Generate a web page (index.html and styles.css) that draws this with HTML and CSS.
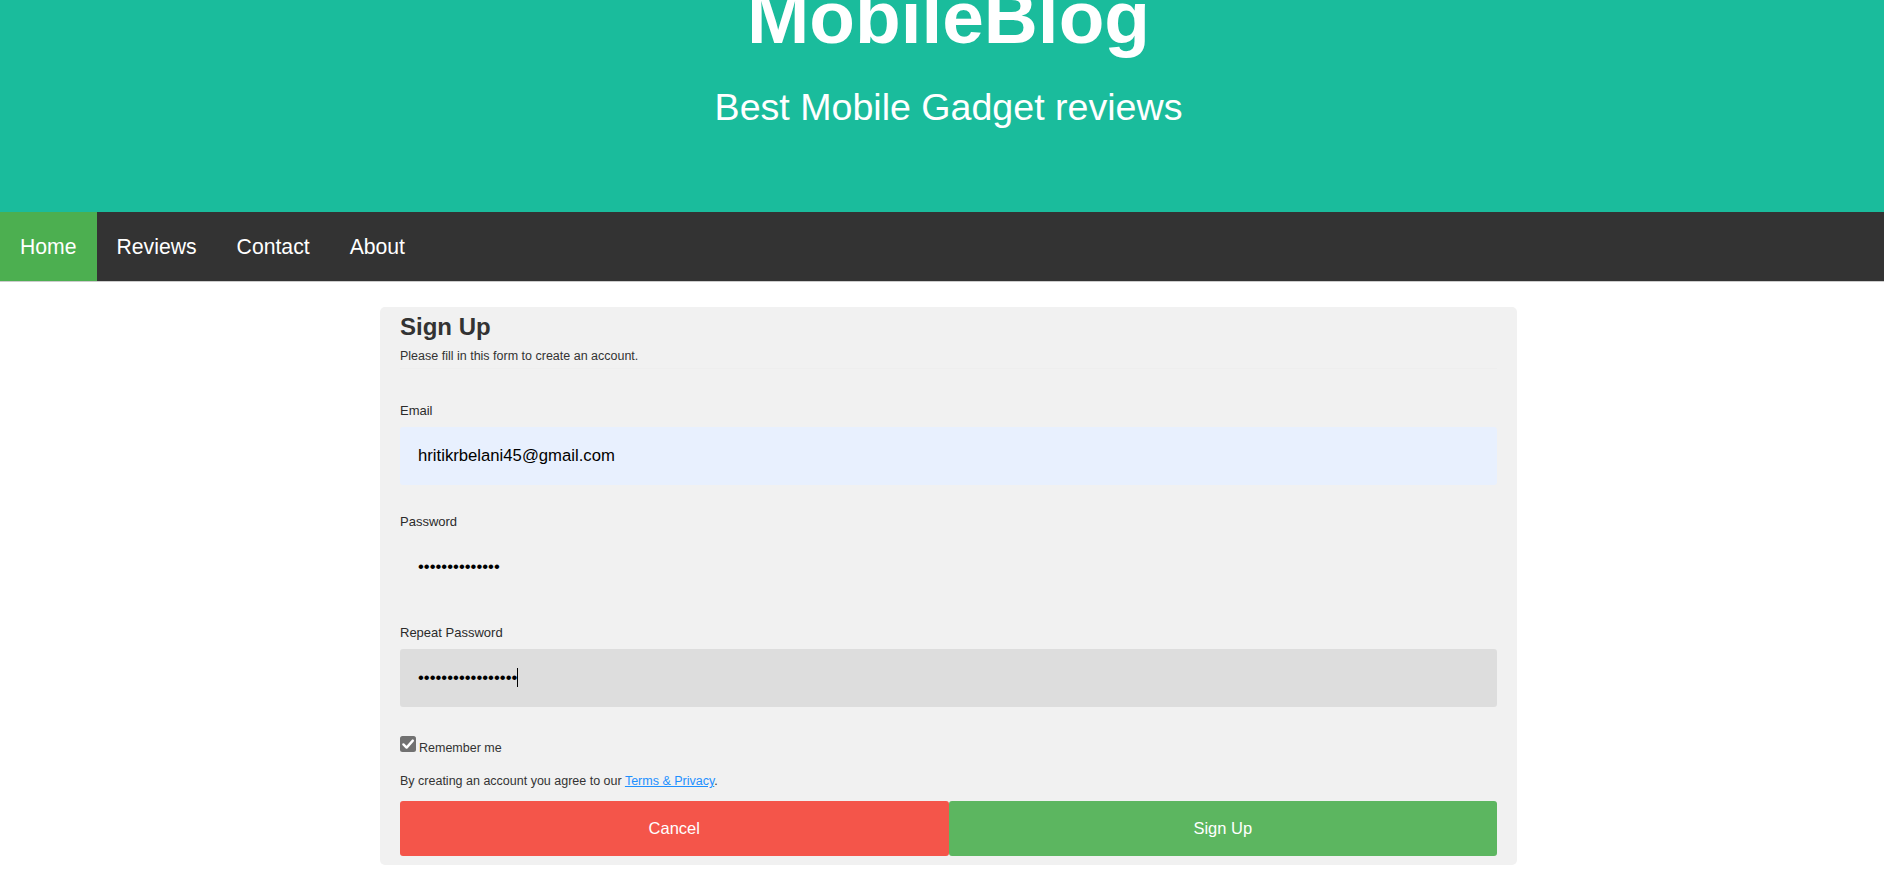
FILE: index.html
```html
<!DOCTYPE html>
<html lang="en">
<head>
<meta charset="utf-8">
<title>MobileBlog</title>
<link rel="stylesheet" href="styles.css">
</head>
<body>
<header class="site-header">
  <h1 class="site-title">MobileBlog</h1>
  <p class="site-tagline">Best Mobile Gadget reviews</p>
</header>
<nav class="navbar">
  <a class="nav-link active" href="#">Home</a>
  <a class="nav-link" href="#">Reviews</a>
  <a class="nav-link" href="#">Contact</a>
  <a class="nav-link" href="#">About</a>
</nav>
<main class="page">
  <form class="signup-card" onsubmit="return false">
    <h2 class="signup-title">Sign Up</h2>
    <p class="signup-intro">Please fill in this form to create an account.</p>
    <hr class="divider">

    <label class="field-label" for="email">Email</label>
    <input class="field-input autofilled" id="email" type="text" value="hritikrbelani45@gmail.com">

    <label class="field-label" for="psw">Password</label>
    <input class="field-input" id="psw" type="password" value="abcdefghijklmn">

    <label class="field-label" for="psw-repeat">Repeat Password</label>
    <div class="field-wrap">
      <input class="field-input focused" id="psw-repeat" type="password" value="abcdefghijklmnopq">
      <span class="caret"></span>
    </div>

    <label class="remember">
      <svg class="check" width="16" height="16" viewBox="0 0 16 16" aria-hidden="true">
        <rect x="0" y="0" width="16" height="16" rx="2.5" fill="#717171"/>
        <path d="M3.4 8.4 L6.6 11.6 L12.8 4.6" fill="none" stroke="#fff" stroke-width="2.4" stroke-linecap="round" stroke-linejoin="round"/>
      </svg>Remember me
    </label>

    <p class="terms">By creating an account you agree to our <a href="#">Terms &amp; Privacy</a>.</p>

    <div class="actions">
      <button type="button" class="btn btn-cancel">Cancel</button>
      <button type="submit" class="btn btn-signup">Sign Up</button>
    </div>
  </form>
</main>
</body>
</html>
```
FILE: styles.css
```css
* {
  box-sizing: border-box;
}

html,
body {
  margin: 0;
  padding: 0;
}

body {
  font-family: "Liberation Sans", Arial, sans-serif;
  background: #ffffff;
  color: #333333;
}

/* Header */
.site-header {
  background: #1abc9c;
  color: #ffffff;
  height: 212px;
  padding-left: 13px;
  text-align: center;
}

.site-title {
  margin: 0;
  font-size: 74.8px;
  line-height: 35px;
  font-weight: 700;
}

.site-tagline {
  margin: 51.5px 0 0;
  font-size: 37.6px;
  line-height: 40px;
}

/* Navigation */
.navbar {
  display: flex;
  background: #333333;
  border-bottom: 1px solid #cccccc;
}

.nav-link {
  color: #ffffff;
  text-decoration: none;
  font-size: 21.2px;
  line-height: 24px;
  padding: 23px 20px 22px;
}

.nav-link.active {
  background: #4caf50;
}

/* Page */
.page {
  padding: 25px 0 0 13px;
}

.signup-card {
  width: 1137px;
  margin: 0 auto;
  background: #f1f1f1;
  border-radius: 5px;
  padding: 6px 20px 9px;
}

.signup-title {
  margin: 0;
  font-size: 24px;
  line-height: 28px;
  font-weight: 700;
  color: #333333;
}

.signup-intro {
  margin: 8px 0 0;
  font-size: 12.5px;
  line-height: 15px;
}

.divider {
  margin: 4px 0 34px;
  height: 0;
  border: 0;
  border-top: 1px solid #eeeeee;
}

.field-label {
  display: block;
  font-size: 13px;
  line-height: 15px;
  margin-bottom: 9px;
  color: #2b2b2b;
}

.field-wrap {
  position: relative;
  margin-bottom: 29.5px;
}

.field-input {
  display: block;
  width: 100%;
  height: 57.5px;
  margin: 0 0 29.5px;
  padding: 0 18px;
  border: none;
  border-radius: 3px;
  outline: none;
  background: #f1f1f1;
  font-family: "Liberation Sans", Arial, sans-serif;
  font-size: 16.7px;
  color: #000000;
}

.field-wrap .field-input {
  margin-bottom: 0;
}

.field-input.autofilled {
  background: #e8f0fe;
}

.field-input.focused {
  background: #dddddd;
}

.caret {
  position: absolute;
  left: 116.5px;
  top: 19px;
  width: 1px;
  height: 19px;
  background: #000000;
}

.remember {
  display: block;
  font-size: 12.5px;
  line-height: 16px;
  color: #333333;
}

.check {
  vertical-align: baseline;
  margin-right: 3px;
}

.terms {
  margin: 18px 0 0;
  font-size: 12.5px;
  line-height: 15px;
}

.terms a {
  color: #1e90ff;
}

.actions {
  display: flex;
  margin-top: 11.8px;
}

.btn {
  flex: 1;
  height: 55px;
  border: none;
  border-radius: 3px;
  color: #ffffff;
  font-family: "Liberation Sans", Arial, sans-serif;
  font-size: 16.5px;
  cursor: pointer;
}

.btn-cancel {
  background: #f4554a;
}

.btn-signup {
  background: #5cb660;
}
```
